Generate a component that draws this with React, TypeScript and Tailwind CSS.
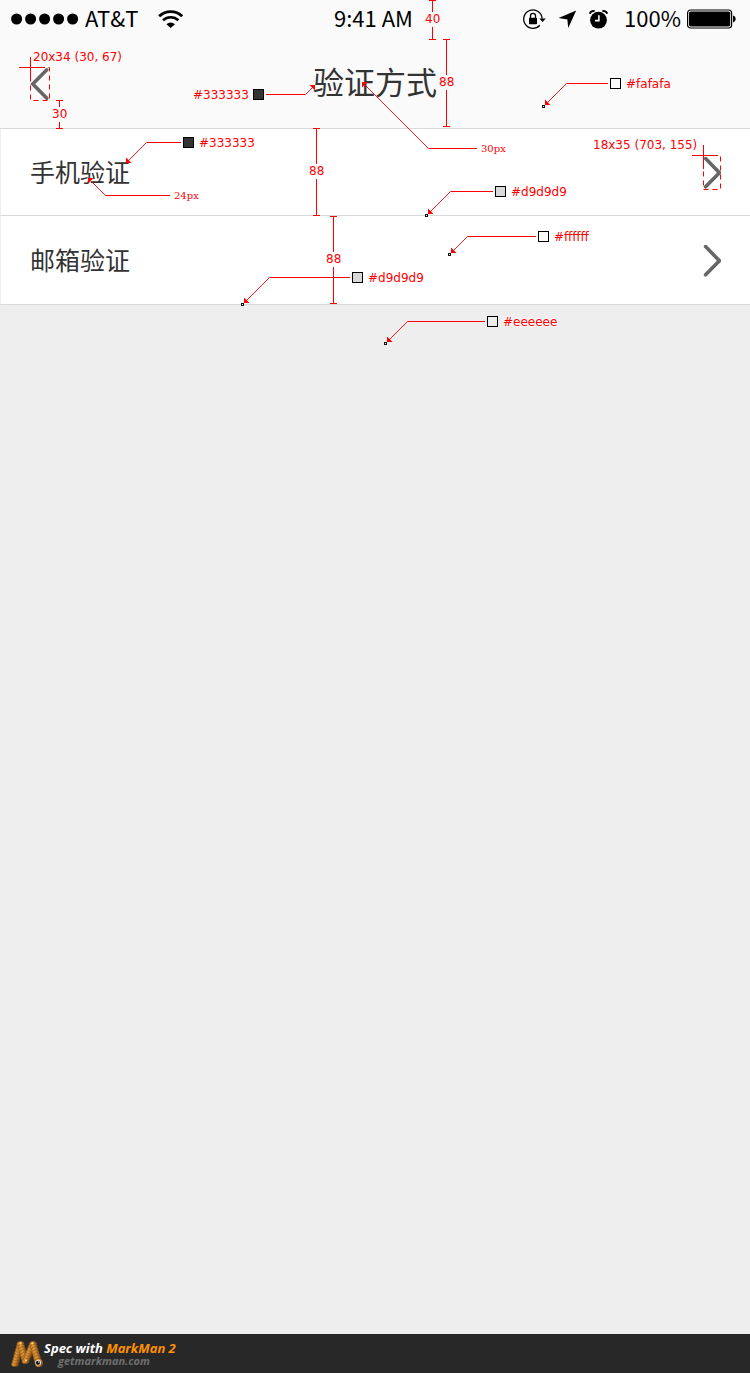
import type { ReactNode } from "react";

type Point = [number, number];

const RED = "#ff0000";

function SignalDots() {
  return (
    <svg width="68" height="12" viewBox="0 0 68 12" aria-hidden="true">
      {[5.6, 19.6, 33.6, 47.6, 61.6].map((x) => (
        <circle key={x} cx={x} cy="6" r="5.5" fill="#000" />
      ))}
    </svg>
  );
}

function WifiIcon() {
  return (
    <svg width="26" height="18" viewBox="0 0 26 18" fill="none" stroke="#000" aria-hidden="true">
      <path d="M1.2 6.2 A16.6 16.6 0 0 1 24.2 6.2" strokeWidth="2.8" />
      <path d="M5 10.3 A11.2 11.2 0 0 1 20.4 10.3" strokeWidth="2.6" />
      <path d="M12.7 18 L8.4 14.2 A6.2 6.2 0 0 1 17 14.2 Z" fill="#000" stroke="none" />
    </svg>
  );
}

function RotationLockIcon() {
  return (
    <svg width="23" height="20" viewBox="0 0 23 20" fill="none" aria-hidden="true">
      <path d="M19.1 9.6 A9.2 9.2 0 1 0 16.8 16.2" stroke="#000" strokeWidth="1.3" />
      <path d="M16.4 9.4 H22.8 L19.6 13 Z" fill="#000" />
      <rect x="6" y="8.8" width="8" height="6.4" rx="0.6" fill="#000" />
      <path d="M7.5 9.4 V6.8 A2.5 2.5 0 0 1 12.5 6.8 V9.4" stroke="#000" strokeWidth="1.3" />
    </svg>
  );
}

function LocationIcon() {
  return (
    <svg width="19" height="18" viewBox="0 0 19 18" aria-hidden="true">
      <path d="M18.2 0.4 L0.5 8 L9.4 9.4 L10.2 18 Z" fill="#000" />
    </svg>
  );
}

function AlarmIcon() {
  return (
    <svg width="19" height="19" viewBox="0 0 19 19" fill="none" aria-hidden="true">
      <circle cx="9.5" cy="10.2" r="8.4" fill="#000" />
      <path
        d="M0.8 3.8 C1.4 1.6 3.6 0.6 5.6 1.2 M18.2 3.8 C17.6 1.6 15.4 0.6 13.4 1.2"
        stroke="#000"
        strokeWidth="2"
      />
      <path d="M9.9 5.2 V10.6 H6" stroke="#fafafa" strokeWidth="1.6" />
    </svg>
  );
}

function BatteryIcon() {
  return (
    <svg width="49" height="20" viewBox="0 0 49 20" fill="none" aria-hidden="true">
      <rect x="0.6" y="1" width="44" height="18" rx="3" stroke="#000" strokeWidth="1.2" />
      <rect x="2" y="2.4" width="41.2" height="15.2" rx="1.8" fill="#000" />
      <path d="M46 6.6 C49.6 7.6 49.6 12.4 46 13.4 Z" fill="#000" />
    </svg>
  );
}

function ChevronLeft() {
  return (
    <svg width="20" height="34" viewBox="0 0 20 34" fill="none" aria-hidden="true">
      <path d="M16.8 2.8 L2.8 17 L16.8 31.2" stroke="#666" strokeWidth="3.6" strokeLinecap="round" />
    </svg>
  );
}

function ChevronRight() {
  return (
    <svg width="18" height="35" viewBox="0 0 18 35" fill="none" aria-hidden="true">
      <path d="M2.6 3.6 L16.4 17.8 L2.6 31.8" stroke="#666" strokeWidth="3.6" strokeLinecap="round" />
    </svg>
  );
}

function StatusBar() {
  return (
    <div className="grid h-10 grid-cols-[1fr_auto_1fr] items-center pr-3.5 pb-0.5 pl-[11px] text-[22px] leading-6 text-black">
      <div className="flex items-center">
        <SignalDots />
        <span className="ml-1.5 pb-1">AT&amp;T</span>
        <span className="ml-5">
          <WifiIcon />
        </span>
      </div>
      <span className="pb-1">9:41 AM</span>
      <div className="flex items-center justify-end gap-3">
        <RotationLockIcon />
        <LocationIcon />
        <AlarmIcon />
        <div className="ml-1 flex items-center gap-1.5">
          <span className="pb-1">100%</span>
          <BatteryIcon />
        </div>
      </div>
    </div>
  );
}

function NavBar() {
  return (
    <div className="grid h-[89px] grid-cols-[1fr_auto_1fr] items-center border-b border-[#d9d9d9] px-[30px]">
      <button type="button" aria-label="返回" className="justify-self-start">
        <ChevronLeft />
      </button>
      <h1 className="pb-1.5 text-[31px] leading-9">验证方式</h1>
    </div>
  );
}

function MethodRow({ className, children }: { className: string; children: ReactNode }) {
  return (
    <li>
      <a
        href="#"
        className={`flex items-center justify-between border-b border-l border-b-[#d9d9d9] border-l-[#eeeeee] bg-white px-[29px] text-[25px] leading-8 ${className}`}
      >
        <span className="pb-0.5">{children}</span>
        <ChevronRight />
      </a>
    </li>
  );
}

/* Leader line: horizontal run, diagonal, arrow head at the lower or upper left. */
function Leader({ from, bend, tip, up }: { from: number; bend: Point; tip: Point; up?: "left" | "right" }) {
  const [x, y] = tip;
  const head =
    up === "left"
      ? `M${x} ${y} h5.5 l-5.5 5.5 Z`
      : up === "right"
        ? `M${x} ${y} h-5.5 l5.5 5.5 Z`
        : `M${x} ${y} v-5.5 l5.5 5.5 Z`;
  return (
    <g>
      <path d={`M${from} ${bend[1]} H${bend[0]}`} stroke={RED} />
      <path d={`M${bend[0]} ${bend[1]} L${x} ${y}`} stroke={RED} strokeWidth="0.9" />
      <path d={head} fill={RED} />
    </g>
  );
}

function Swatch({ x, y, fill }: { x: number; y: number; fill: string }) {
  return <rect x={x + 0.5} y={y + 0.5} width="10" height="10" fill={fill} stroke="#000" />;
}

function Sample({ x, y }: { x: number; y: number }) {
  return <rect x={x + 0.5} y={y + 0.5} width="2" height="2" fill="#fff" stroke="#111" />;
}

function Measure({ x, top, bottom, gap }: { x: number; top: number; bottom: number; gap: Point }) {
  const c = x + 0.5;
  return (
    <path
      d={`M${x - 3} ${top + 0.5} h7 M${c} ${top} V${gap[0]} M${c} ${gap[1]} V${bottom} M${x - 3} ${bottom + 0.5} h7`}
      stroke={RED}
    />
  );
}

function Bounds({ x, y, w, h }: { x: number; y: number; w: number; h: number }) {
  return (
    <g stroke={RED}>
      <rect x={x + 0.5} y={y + 0.5} width={w} height={h} strokeDasharray="5 4" />
      <path d={`M${x + 0.5} ${y - 10} v24 M${x - 11} ${y + 0.5} h26`} />
    </g>
  );
}

function Label({ className, children }: { className: string; children: ReactNode }) {
  return (
    <span
      className={`absolute font-['DejaVu_Sans',sans-serif] text-[12px] leading-4 whitespace-nowrap text-[#ff0000] ${className}`}
    >
      {children}
    </span>
  );
}

function Annotations() {
  return (
    <div className="pointer-events-none absolute top-0 left-0">
      <svg width="750" height="350" viewBox="0 0 750 350" fill="none">
        <Measure x={432} top={0} bottom={39} gap={[12, 27]} />
        <Measure x={446} top={39} bottom={126} gap={[75, 90]} />
        <Measure x={59} top={100} bottom={128} gap={[107, 122]} />
        <Measure x={316} top={128} bottom={215} gap={[164, 179]} />
        <Measure x={333} top={216} bottom={303} gap={[252, 267]} />

        <Bounds x={30} y={67} w={19} h={33} />
        <Bounds x={703} y={155} w={17} h={34} />

        <Swatch x={253} y={89} fill="#333333" />
        <Leader from={266} bend={[305.5, 94.5]} tip={[315, 85]} up="right" />

        <Swatch x={610} y={78} fill="#fafafa" />
        <Leader from={608} bend={[566.5, 83.5]} tip={[545, 105]} />
        <Sample x={542} y={105} />

        <Swatch x={183} y={137} fill="#333333" />
        <Leader from={181} bend={[146.5, 142.5]} tip={[126, 163]} />

        <Leader from={170} bend={[105.5, 195.5]} tip={[88, 178]} up="left" />
        <Leader from={477} bend={[428.5, 148.5]} tip={[362, 82]} up="left" />

        <Swatch x={495} y={186} fill="#d9d9d9" />
        <Leader from={493} bend={[450.5, 191.5]} tip={[428, 214]} />
        <Sample x={425} y={214} />

        <Swatch x={538} y={231} fill="#ffffff" />
        <Leader from={536} bend={[467.5, 236.5]} tip={[451, 253]} />
        <Sample x={448} y={253} />

        <Swatch x={352} y={272} fill="#d9d9d9" />
        <Leader from={350} bend={[269.5, 277.5]} tip={[244, 303]} />
        <Sample x={241} y={303} />

        <Swatch x={487} y={316} fill="#eeeeee" />
        <Leader from={485} bend={[407.5, 321.5]} tip={[387, 342]} />
        <Sample x={384} y={342} />
      </svg>

      <Label className="top-[11px] left-[425px]">40</Label>
      <Label className="top-[74px] left-[439px]">88</Label>
      <Label className="top-[106px] left-[52px]">30</Label>
      <Label className="top-[163px] left-[309px]">88</Label>
      <Label className="top-[251px] left-[326px]">88</Label>

      <Label className="top-[49px] left-[33px]">20x34 (30, 67)</Label>
      <Label className="top-[137px] left-[593px]">18x35 (703, 155)</Label>

      <Label className="top-[87px] left-[193px]">#333333</Label>
      <Label className="top-[76px] left-[626px]">#fafafa</Label>
      <Label className="top-[135px] left-[199px]">#333333</Label>
      <Label className="top-[184px] left-[511px]">#d9d9d9</Label>
      <Label className="top-[229px] left-[554px]">#ffffff</Label>
      <Label className="top-[270px] left-[368px]">#d9d9d9</Label>
      <Label className="top-[314px] left-[503px] [text-shadow:0_0_1px_#fff,1px_1px_1px_#fff,-1px_-1px_1px_#fff]">
        #eeeeee
      </Label>

      <span className="absolute top-[188px] left-[174px] font-['DejaVu_Serif',serif] text-[10px] leading-4 text-[#ff0000]">
        24px
      </span>
      <span className="absolute top-[141px] left-[481px] font-['DejaVu_Serif',serif] text-[10px] leading-4 text-[#ff0000]">
        30px
      </span>
    </div>
  );
}

function lerp(a: Point, b: Point, t: number): Point {
  return [a[0] + (b[0] - a[0]) * t, a[1] + (b[1] - a[1]) * t];
}

const LOGO_STROKES: [Point, Point, number][] = [
  [[5, 25], [10.5, 5], 8],
  [[10.5, 5], [15.5, 22], 7],
  [[15.5, 22], [23, 5], 8],
  [[23, 5], [28, 22], 7],
];

function MarkManLogo() {
  return (
    <svg width="34" height="29" viewBox="0 0 34 29" aria-hidden="true">
      <defs>
        <linearGradient id="segment" x1="0" y1="0" x2="1" y2="0.3">
          <stop offset="0" stopColor="#a8651a" />
          <stop offset="0.45" stopColor="#e09a3c" />
          <stop offset="1" stopColor="#8a4f12" />
        </linearGradient>
      </defs>
      {LOGO_STROKES.map(([a, b, n], s) =>
        Array.from({ length: n }, (_, i) => {
          const [x, y] = lerp(a, b, i / (n - 1));
          return (
            <ellipse
              key={`${s}-${i}`}
              cx={x}
              cy={y}
              rx="3.6"
              ry="2.6"
              fill="url(#segment)"
              stroke="#7a430c"
              strokeWidth="0.4"
            />
          );
        }),
      )}
      <circle cx="10.5" cy="4.4" r="1" fill="#ffe08a" />
      <circle cx="22.4" cy="4.4" r="1" fill="#ffe08a" />
      <circle cx="16" cy="21.5" r="1" fill="#ffe08a" />
      <circle cx="29" cy="24" r="4" fill="url(#segment)" />
      <circle cx="28.2" cy="23.6" r="2.9" fill="#ddd" />
      <circle cx="28" cy="23.8" r="2.1" fill="#111" />
      <circle cx="28.8" cy="23" r="0.7" fill="#fff" />
    </svg>
  );
}

function SpecFooter() {
  return (
    <footer className="flex h-[39px] items-center bg-[#282828] pl-2.5 font-['Open_Sans',sans-serif] font-bold italic">
      <MarkManLogo />
      <div>
        <p className="text-[13px] leading-3.5 text-white">
          Spec with <span className="text-[#ff9000]">MarkMan 2</span>
        </p>
        <p className="pl-3.5 text-[11px] leading-3 text-[#6f6f6f]">getmarkman.com</p>
      </div>
    </footer>
  );
}

export default function App() {
  return (
    <div className="relative flex min-h-screen flex-col bg-[#eeeeee] font-['Noto_Sans_CJK_SC',sans-serif] text-[#333333]">
      <header className="bg-[#fafafa]">
        <StatusBar />
        <NavBar />
      </header>
      <main className="grow">
        <ul>
          <MethodRow className="h-[87px]">手机验证</MethodRow>
          <MethodRow className="h-[89px]">邮箱验证</MethodRow>
        </ul>
      </main>
      <SpecFooter />
      <Annotations />
    </div>
  );
}
